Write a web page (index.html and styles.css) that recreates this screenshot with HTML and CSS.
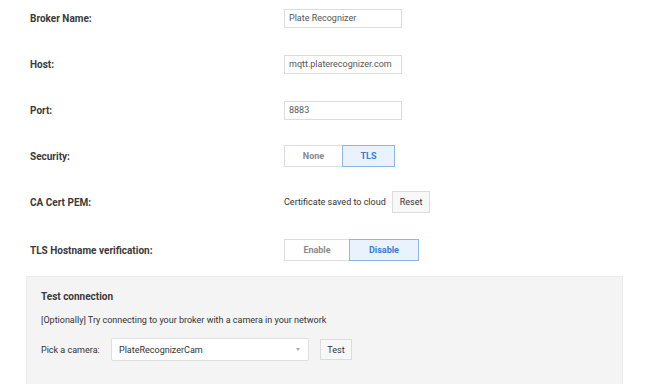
FILE: index.html
```html
<!DOCTYPE html>
<html lang="en">
<head>
    <meta charset="UTF-8">
    <meta name="viewport" content="width=device-width, initial-scale=1.0">
    <title>MQTT Broker Settings</title>
    <link rel="stylesheet" href="styles.css">
</head>
<body>
    <div class="page">
        <form class="broker-form">
            <div class="form-row">
                <label class="form-label">Broker Name:</label>
                <input class="text-input" type="text" value="Plate Recognizer">
            </div>

            <div class="form-row">
                <label class="form-label">Host:</label>
                <input class="text-input" type="text" value="mqtt.platerecognizer.com">
            </div>

            <div class="form-row">
                <label class="form-label">Port:</label>
                <input class="text-input" type="text" value="8883">
            </div>

            <div class="form-row">
                <label class="form-label">Security:</label>
                <div class="segmented">
                    <button type="button" class="segment seg-none">None</button>
                    <button type="button" class="segment seg-tls active">TLS</button>
                </div>
            </div>

            <div class="form-row">
                <label class="form-label">CA Cert PEM:</label>
                <div class="cert-status">
                    <span>Certificate saved to cloud</span>
                    <button type="button" class="plain-button">Reset</button>
                </div>
            </div>

            <div class="form-row row-last">
                <label class="form-label">TLS Hostname verification:</label>
                <div class="segmented">
                    <button type="button" class="segment seg-enable">Enable</button>
                    <button type="button" class="segment seg-disable active">Disable</button>
                </div>
            </div>
        </form>

        <!-- Test connection -->
        <div class="test-box">
            <h3>Test connection</h3>
            <p class="test-hint">[Optionally] Try connecting to your broker with a camera in your network</p>
            <div class="camera-row">
                <span class="camera-label">Pick a camera:</span>
                <div class="camera-select">
                    <span>PlateRecognizerCam</span>
                    <span class="caret"></span>
                </div>
                <button type="button" class="plain-button test-button">Test</button>
            </div>
        </div>
    </div>
</body>
</html>
```

FILE: styles.css
```css
:root {
    --text-color: #333333;
    --muted-color: #8a8a8a;
    --border-color: #dcdcdc;
    --accent-color: #3a7bd5;
    --accent-bg: #eaf2fd;
    --accent-border: #8db5ea;
}

body {
    margin: 0;
    font-family: Roboto, "Liberation Sans", sans-serif;
    color: var(--text-color);
    background: #ffffff;
    overflow: hidden;
}

.page {
    padding: 7px 27px 0 26px;
}

.broker-form {
    display: flex;
    flex-direction: column;
    gap: 24px;
    padding-left: 4px;
}

.form-row {
    display: flex;
    align-items: center;
    height: 22px;
}

.row-last {
    margin-top: 2px;
}

.form-label {
    width: 254px;
    font-size: 10px;
    font-weight: 700;
    color: #3a3a3a;
}

.text-input {
    box-sizing: border-box;
    width: 118px;
    height: 19px;
    padding: 0 4px;
    border: 1px solid var(--border-color);
    border-radius: 0;
    font-family: inherit;
    font-size: 9px;
    color: #555555;
    outline: none;
}

.segmented {
    display: flex;
    height: 22px;
}

.segment {
    box-sizing: border-box;
    height: 22px;
    border: 1px solid var(--border-color);
    background: #ffffff;
    font-family: inherit;
    font-size: 9px;
    font-weight: 700;
    color: var(--muted-color);
    cursor: pointer;
    padding: 0;
}

.segment + .segment {
    margin-left: -1px;
}

.segment.active {
    position: relative;
    background: var(--accent-bg);
    border-color: var(--accent-border);
    color: var(--accent-color);
}

.seg-none {
    width: 59px;
}

.seg-tls {
    width: 53px;
}

.seg-enable {
    width: 66px;
}

.seg-disable {
    width: 70px;
}

.cert-status {
    display: flex;
    align-items: center;
    gap: 6px;
    font-size: 9px;
    color: #333333;
}

.plain-button {
    box-sizing: border-box;
    height: 22px;
    padding: 0 7px;
    border: 1px solid var(--border-color);
    background: #f8f8f8;
    font-family: inherit;
    font-size: 9px;
    color: #333333;
    cursor: pointer;
}

.test-box {
    margin-top: 15px;
    height: 108px;
    padding: 14px 14px 0;
    background: #f4f4f4;
    border: 1px solid #ececec;
    border-bottom: none;
    box-sizing: border-box;
}

.test-box h3 {
    margin: 0;
    font-size: 10px;
    font-weight: 700;
    color: #3a3a3a;
    line-height: 12px;
}

.test-hint {
    margin: 11px 0 0;
    font-size: 9px;
    line-height: 12px;
    color: #333333;
}

.camera-row {
    display: flex;
    align-items: center;
    margin-top: 12px;
}

.camera-label {
    width: 70px;
    font-size: 9px;
}

.camera-select {
    box-sizing: border-box;
    width: 198px;
    height: 23px;
    display: flex;
    align-items: center;
    justify-content: space-between;
    padding: 0 8px 0 7px;
    background: #ffffff;
    border: 1px solid #e0e0e0;
    border-radius: 2px;
    font-size: 9px;
}

.caret {
    width: 0;
    height: 0;
    border-left: 2.5px solid transparent;
    border-right: 2.5px solid transparent;
    border-top: 3px solid #aaaaaa;
}

.test-button {
    margin-left: 11px;
    height: 21px;
    width: 32px;
    padding: 0;
}
```
